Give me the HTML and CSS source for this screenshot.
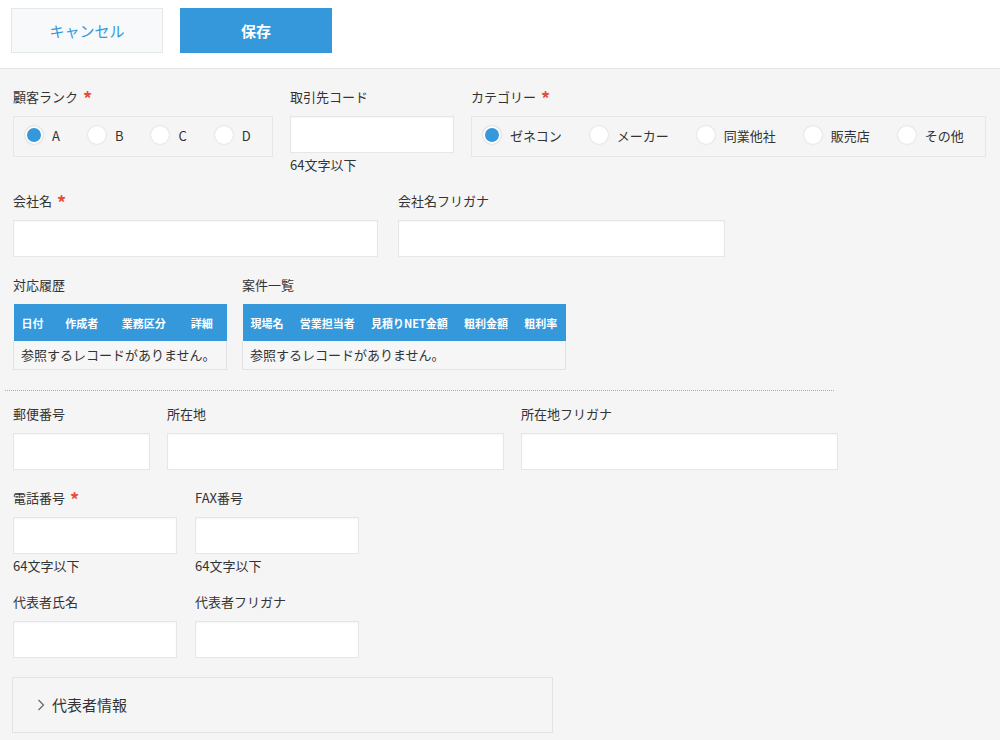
FILE: index.html
```html
<!DOCTYPE html>
<html lang="ja">
<head>
    <meta charset="UTF-8">
    <meta name="viewport" content="width=device-width, initial-scale=1.0">
    <title>顧客情報 - 編集</title>
    <link rel="stylesheet" href="styles.css">
</head>
<body>
    <div class="toolbar">
        <button type="button" class="btn btn-cancel">キャンセル</button>
        <button type="button" class="btn btn-save">保存</button>
    </div>

    <div class="form">
        <div class="row gap-17">
            <div class="field">
                <div class="label">顧客ランク<span class="required">*</span></div>
                <div class="radio-group rank-group">
                    <label class="option"><span class="radio checked"></span>A</label>
                    <label class="option"><span class="radio"></span>B</label>
                    <label class="option"><span class="radio"></span>C</label>
                    <label class="option"><span class="radio"></span>D</label>
                </div>
            </div>
            <div class="field">
                <div class="label">取引先コード</div>
                <input type="text" class="input size-s">
                <div class="hint">64文字以下</div>
            </div>
            <div class="field">
                <div class="label">カテゴリー<span class="required">*</span></div>
                <div class="radio-group category-group">
                    <label class="option"><span class="radio checked"></span>ゼネコン</label>
                    <label class="option"><span class="radio"></span>メーカー</label>
                    <label class="option"><span class="radio"></span>同業他社</label>
                    <label class="option"><span class="radio"></span>販売店</label>
                    <label class="option"><span class="radio"></span>その他</label>
                </div>
            </div>
        </div>

        <div class="row gap-20">
            <div class="field">
                <div class="label">会社名<span class="required">*</span></div>
                <input type="text" class="input size-l">
            </div>
            <div class="field">
                <div class="label">会社名フリガナ</div>
                <input type="text" class="input size-m">
            </div>
        </div>

        <div class="row gap-15">
            <div class="field">
                <div class="label">対応履歴</div>
                <table class="ref-table history">
                    <thead>
                        <tr>
                            <th>日付</th>
                            <th>作成者</th>
                            <th>業務区分</th>
                            <th>詳細</th>
                        </tr>
                    </thead>
                    <tbody>
                        <tr><td colspan="4">参照するレコードがありません。</td></tr>
                    </tbody>
                </table>
            </div>
            <div class="field">
                <div class="label">案件一覧</div>
                <table class="ref-table projects">
                    <thead>
                        <tr>
                            <th>現場名</th>
                            <th>営業担当者</th>
                            <th>見積りNET金額</th>
                            <th>粗利金額</th>
                            <th>粗利率</th>
                        </tr>
                    </thead>
                    <tbody>
                        <tr><td colspan="5">参照するレコードがありません。</td></tr>
                    </tbody>
                </table>
            </div>
        </div>

        <div class="separator"></div>

        <div class="row gap-17">
            <div class="field">
                <div class="label">郵便番号</div>
                <input type="text" class="input size-zip">
            </div>
            <div class="field">
                <div class="label">所在地</div>
                <input type="text" class="input size-addr">
            </div>
            <div class="field">
                <div class="label">所在地フリガナ</div>
                <input type="text" class="input size-kana">
            </div>
        </div>

        <div class="row">
            <div class="field">
                <div class="label">電話番号<span class="required">*</span></div>
                <input type="text" class="input size-s">
                <div class="hint">64文字以下</div>
            </div>
            <div class="field">
                <div class="label">FAX番号</div>
                <input type="text" class="input size-s">
                <div class="hint">64文字以下</div>
            </div>
        </div>

        <div class="row">
            <div class="field">
                <div class="label">代表者氏名</div>
                <input type="text" class="input size-s">
            </div>
            <div class="field">
                <div class="label">代表者フリガナ</div>
                <input type="text" class="input size-s">
            </div>
        </div>

        <div class="group-box">
            <svg class="chevron" width="8" height="12" viewBox="0 0 8 12">
                <polyline points="1.5,1 6.5,6 1.5,11" fill="none" stroke="#666" stroke-width="1.2"/>
            </svg>
            <span class="group-title">代表者情報</span>
        </div>
    </div>
</body>
</html>
```

FILE: styles.css
```css
* {
    margin: 0;
    padding: 0;
    box-sizing: border-box;
    font-family: "Noto Sans CJK JP", "Liberation Sans", sans-serif;
}
body {
    background-color: #f5f5f5;
    color: #333;
}
.toolbar {
    height: 69px;
    padding: 8px 11px;
    background-color: white;
    border-bottom: 1px solid #e3e3e3;
    display: flex;
    align-items: flex-start;
}
.btn {
    width: 152px;
    height: 45px;
    font-size: 15px;
    cursor: pointer;
}
.btn-cancel {
    background-color: #f7f9fa;
    border: 1px solid #e3e7e8;
    color: #3498db;
    margin-right: 17px;
}
.btn-save {
    background-color: #3498db;
    border: 1px solid #3498db;
    color: white;
    font-weight: bold;
}
.form {
    padding: 18px 13px 0 13px;
}
.row {
    display: flex;
    align-items: flex-start;
    gap: 18px;
    margin-bottom: 18px;
}
.row.gap-15 {
    gap: 15px;
}
.row.gap-17 {
    gap: 17px;
}
.row.gap-20 {
    gap: 20px;
}
.label {
    font-size: 13px;
    line-height: 20px;
    margin-bottom: 9px;
    white-space: nowrap;
}
.required {
    color: #e74c3c;
    font-size: 18px;
    font-weight: bold;
    margin-left: 5px;
    line-height: 20px;
    vertical-align: top;
    position: relative;
    top: 1px;
}
.input {
    display: block;
    height: 37px;
    background-color: white;
    border: 1px solid #e3e7e8;
    box-shadow: inset 0 1px 2px rgba(0,0,0,0.04);
    padding: 0 8px;
    font-size: 13px;
}
.size-zip {
    width: 137px;
}
.size-s {
    width: 164px;
}
.size-kana {
    width: 317px;
}
.size-m {
    width: 327px;
}
.size-addr {
    width: 337px;
}
.size-l {
    width: 365px;
}
.hint {
    font-size: 13px;
    line-height: 16px;
    margin-top: 4px;
}
.radio-group {
    height: 41px;
    border: 1px solid #e3e7e8;
    display: flex;
    align-items: center;
    padding: 0 11px 3px 11px;
}
.rank-group {
    width: 260px;
}
.category-group {
    width: 515px;
}
.option {
    display: flex;
    align-items: center;
    font-size: 13px;
    margin-right: 28px;
    white-space: nowrap;
}
.radio {
    width: 18px;
    height: 18px;
    border-radius: 50%;
    background-color: white;
    box-shadow: 0 0 2px rgba(0,0,0,0.18);
    margin-right: 9px;
}
.radio.checked {
    background-color: #3498db;
    border: 2px solid white;
    box-shadow: 0 0 2px rgba(0,0,0,0.25);
}
.ref-table {
    border-collapse: collapse;
}
.ref-table.history {
    width: 214px;
}
.ref-table.projects {
    width: 324px;
}
.ref-table th {
    background-color: #3498db;
    color: white;
    font-size: 11px;
    font-weight: bold;
    height: 37px;
    padding: 0 8px;
    text-align: left;
    white-space: nowrap;
}
.ref-table td {
    background-color: #f6f6f6;
    border: 1px solid #e3e3e3;
    border-top: none;
    font-size: 13px;
    height: 28px;
    padding: 0 7px;
    white-space: nowrap;
}
.separator {
    width: 829px;
    margin: 20px 0 13px -8px;
    border-top: 1px dotted #aaa;
}
.group-box {
    width: 541px;
    height: 56px;
    margin: 19px 0 0 -1px;
    border: 1px solid #e3e3e3;
    display: flex;
    align-items: center;
    padding-left: 24px;
}
.chevron {
    margin-right: 7px;
}
.group-title {
    font-size: 15px;
}
```
